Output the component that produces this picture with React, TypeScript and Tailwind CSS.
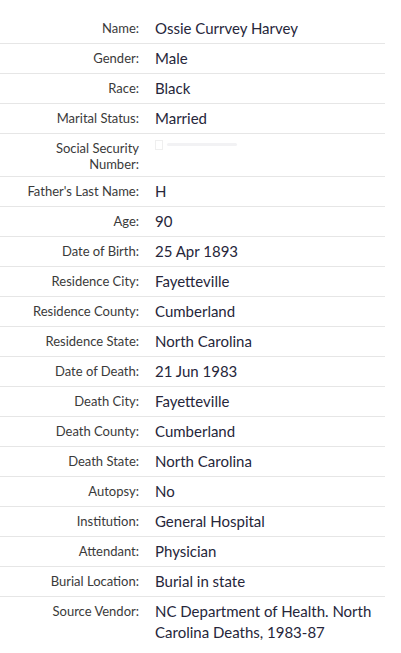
const rows: [string, string][] = [
  ["Name:", "Ossie Currvey Harvey"],
  ["Gender:", "Male"],
  ["Race:", "Black"],
  ["Marital Status:", "Married"],
  ["Social Security Number:", ""],
  ["Father's Last Name:", "H"],
  ["Age:", "90"],
  ["Date of Birth:", "25 Apr 1893"],
  ["Residence City:", "Fayetteville"],
  ["Residence County:", "Cumberland"],
  ["Residence State:", "North Carolina"],
  ["Date of Death:", "21 Jun 1983"],
  ["Death City:", "Fayetteville"],
  ["Death County:", "Cumberland"],
  ["Death State:", "North Carolina"],
  ["Autopsy:", "No"],
  ["Institution:", "General Hospital"],
  ["Attendant:", "Physician"],
  ["Burial Location:", "Burial in state"],
  ["Source Vendor:", "NC Department of Health. North Carolina Deaths, 1983-87"],
];

export default function App() {
  return (
    <div
      className="w-[401px] h-[653px] bg-white pt-[14px] overflow-hidden"
      style={{ fontFamily: "Lato, 'Open Sans', sans-serif" }}
    >
      <div className="w-[385px]">
        {rows.map(([label, value], i) => (
          <div
            key={i}
            className={`flex py-[4px] ${i < rows.length - 1 ? "border-b border-[#e6e6e6]" : ""}`}
          >
            <div className="w-[139px] shrink-0 text-right text-[13px] leading-[16px] text-[#3a3a3a] pt-[2px]">
              {label === "Social Security Number:" ? (
                <>
                  Social Security
                  <br />
                  Number:
                </>
              ) : (
                label
              )}
            </div>
            <div className="pl-[16px] text-[15px] leading-[21px] text-[#26263a] w-[246px] shrink-0">
              {value === "" && i === 4 ? (
                <div className="flex items-start gap-[4px] pt-[2px]">
                  <div className="w-[8px] h-[10px] border border-[#efefef]"></div>
                  <div className="w-[70px] h-[3px] mt-[3px] bg-[#f2f2f4] rounded"></div>
                </div>
              ) : (
                value
              )}
            </div>
          </div>
        ))}
      </div>
    </div>
  );
}
